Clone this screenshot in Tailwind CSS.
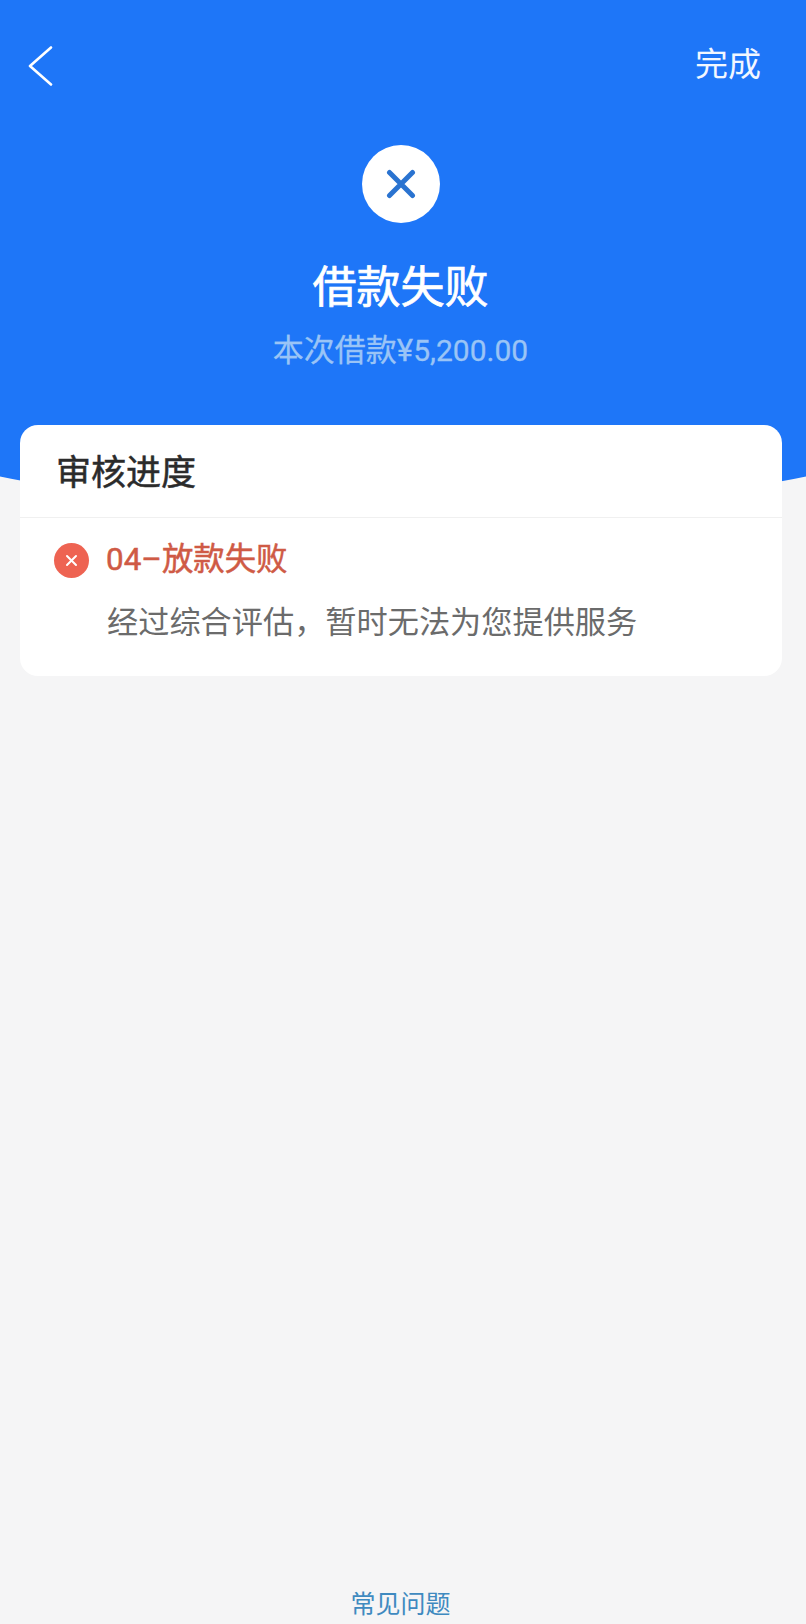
<!DOCTYPE html>
<html lang="zh-CN">
<head>
  <meta charset="UTF-8" />
  <meta name="viewport" content="width=device-width, initial-scale=1.0" />
  <title>借款失败</title>
  <script src="https://cdn.jsdelivr.net/npm/@tailwindcss/browser@4"></script>
</head>
<body class="bg-[#f5f5f6]">
  <div class="relative w-[806px] h-[1624px] overflow-hidden flex flex-col font-['Roboto','Noto_Sans_CJK_SC',sans-serif]">
    <!-- blue curved backdrop -->
    <div class="absolute left-[-400px] top-[-55px] w-[1606px] h-[570px] rounded-[50%] bg-[#1e76f8]"></div>

    <div class="relative flex flex-col flex-1">
      <header class="flex items-center justify-between pl-[28px] pr-[45px] pt-[46px] h-[85px]">
        <svg class="w-[25px] h-[40px]" viewBox="0 0 25 40" fill="none" stroke="#ffffff" stroke-width="2.6" stroke-linecap="round" stroke-linejoin="round"><path d="M23 1.5 2 20l21 18.5"/></svg>
        <span class="text-[33px] leading-[40px] text-[#f2f7ff] -mt-[2px]">完成</span>
      </header>

      <section class="flex flex-col items-center pt-[60px] pr-[5px]">
        <div class="w-[78px] h-[78px] rounded-full bg-white flex items-center justify-center">
          <svg class="w-[30px] h-[30px]" viewBox="0 0 30 30" fill="none" stroke="#2a73d0" stroke-width="5" stroke-linecap="round"><path d="M3.5 3.5l23 23M26.5 3.5l-23 23"/></svg>
        </div>
        <h1 class="mt-[37px] text-[44px] leading-[56px] text-white [-webkit-text-stroke:0.7px]">借款失败</h1>
        <p class="mt-[15px] text-[31px] leading-[40px] text-[#9ac4f6] whitespace-nowrap [-webkit-text-stroke:0.3px]">本次借款¥<span class="text-[30px]">5,200.00</span></p>
      </section>

      <main class="mx-[20px] mt-[54px] w-[762px] h-[251px] bg-white rounded-[18px] flex flex-col">
        <div class="h-[93px] pl-[36px] pt-[6px] flex items-center border-b border-[#f0f0f0]">
          <h2 class="text-[35px] leading-[44px] text-[#2b2b2b] [-webkit-text-stroke:0.5px]">审核进度</h2>
        </div>
        <div class="pl-[34px] pt-[23px]">
          <div class="flex items-center gap-[17px]">
            <span class="w-[35px] h-[35px] rounded-full bg-[#ee6352] flex items-center justify-center">
              <svg class="w-[13px] h-[13px]" viewBox="0 0 13 13" fill="none" stroke="#ffffff" stroke-width="2" stroke-linecap="round"><path d="M2 2l9 9M11 2l-9 9"/></svg>
            </span>
            <span class="text-[31.4px] leading-[38px] text-[#cf5a45] [-webkit-text-stroke:0.5px]">04–放款失败</span>
          </div>
          <p class="mt-[25px] ml-[53px] text-[31.2px] leading-[38px] text-[#6b6b6b] whitespace-nowrap">经过综合评估，暂时无法为您提供服务</p>
        </div>
      </main>

      <footer class="mt-auto pb-[3px] pr-[5px] text-center">
        <a class="text-[25px] leading-[32px] text-[#3f8ac0]">常见问题</a>
      </footer>
    </div>
  </div>
</body>
</html>
